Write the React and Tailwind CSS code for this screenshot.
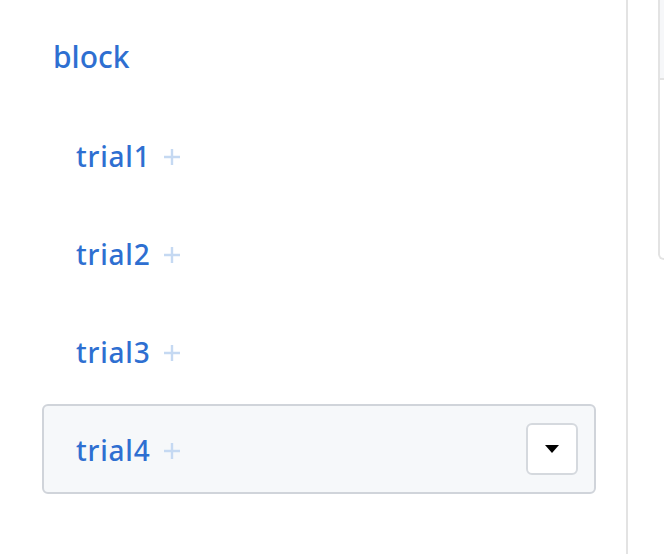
import { useState } from "react";

const trials = ["trial1", "trial2", "trial3", "trial4"];

function TrialRow({ name, active }) {
  return (
    <div
      className={`flex h-[90px] items-center justify-between rounded-md border-2 pl-[32px] pr-[16px] ${
        active ? "border-[#d0d4da] bg-[#f6f8fa]" : "border-transparent"
      }`}
    >
      <div className="mt-[2px] flex items-center gap-[12px]">
        <span className="text-[28px] font-medium tracking-[0.8px] text-[#2e6fd1]">{name}</span>
        <svg width="18" height="18" viewBox="0 0 18 18" className="mt-[2px]">
          <path d="M9 1 V17 M1 9 H17" stroke="#c5d9f2" strokeWidth="2.4" />
        </svg>
      </div>
      {active && (
        <button className="flex h-[52px] w-[52px] items-center justify-center rounded-md border-2 border-[#d5d9de] bg-white">
          <svg width="14" height="8" viewBox="0 0 14 8">
            <path d="M0 0 L14 0 L7 8 Z" fill="#000" />
          </svg>
        </button>
      )}
    </div>
  );
}

export default function App() {
  const [hover, setHover] = useState("trial4");
  return (
    <div
      className="flex h-[554px] w-[664px] overflow-hidden bg-white"
      style={{ fontFamily: '"Noto Sans", "Open Sans", sans-serif' }}
    >
      <div className="w-[628px] shrink-0 border-r-2 border-[#e3e3e3] pl-[42px] pr-[30px] pt-[34px]">
        <h2 className="pl-[11px] text-[30px] font-medium leading-[46px] text-[#2e6fd1]">block</h2>
        <div className="mt-[30px] flex flex-col gap-[8px]">
          {trials.map((t) => (
            <div key={t} onMouseEnter={() => setHover(t)}>
              <TrialRow name={t} active={hover === t} />
            </div>
          ))}
        </div>
      </div>
      <div className="ml-[30px] h-[260px] flex-1 rounded-bl-md border-b-2 border-l-2 border-[#e3e3e3]">
        <div className="h-[80px] border-b-2 border-[#e3e3e3] bg-[#f6f7f9]" />
      </div>
    </div>
  );
}
